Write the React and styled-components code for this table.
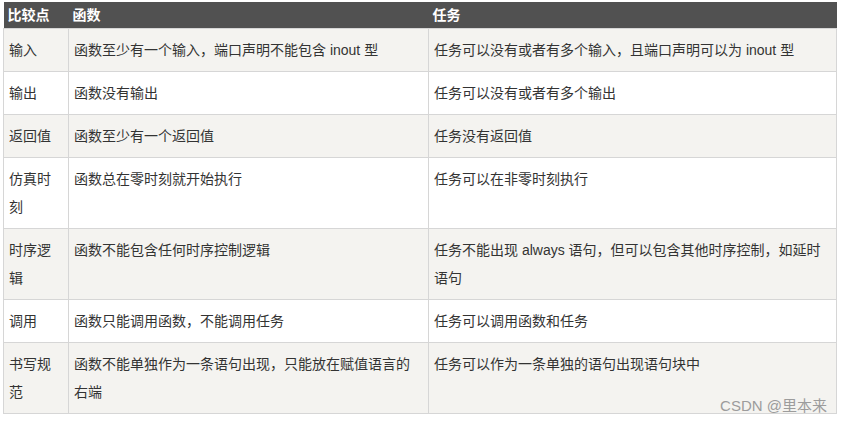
import styled, { createGlobalStyle } from "styled-components";

const GlobalStyle = createGlobalStyle`
  html, body {
    margin: 0;
    padding: 0;
    background: #fff;
  }
  body {
    font-family: "Liberation Sans", "Noto Sans CJK SC", sans-serif;
  }
`;

const rows = [
  ["输入", "函数至少有一个输入，端口声明不能包含 inout 型", "任务可以没有或者有多个输入，且端口声明可以为 inout 型"],
  ["输出", "函数没有输出", "任务可以没有或者有多个输出"],
  ["返回值", "函数至少有一个返回值", "任务没有返回值"],
  ["仿真时刻", "函数总在零时刻就开始执行", "任务可以在非零时刻执行"],
  ["时序逻辑", "函数不能包含任何时序控制逻辑", "任务不能出现 always 语句，但可以包含其他时序控制，如延时语句"],
  ["调用", "函数只能调用函数，不能调用任务", "任务可以调用函数和任务"],
  ["书写规范", "函数不能单独作为一条语句出现，只能放在赋值语言的右端", "任务可以作为一条单独的语句出现语句块中"],
];

const App = () => {
  return (
    <Page>
      <GlobalStyle />
      <Wrap>
        <Table>
          <colgroup>
            <col style={{ width: 65 }} />
            <col style={{ width: 360 }} />
            <col style={{ width: 408 }} />
          </colgroup>
          <thead>
            <tr>
              <Th>比较点</Th>
              <Th>函数</Th>
              <Th>任务</Th>
            </tr>
          </thead>
          <tbody>
            {rows.map((row, key) => (
              <Row key={key} $shaded={key % 2 === 0}>
                {row.map((cell, i) => (
                  <Td key={i}>{cell}</Td>
                ))}
              </Row>
            ))}
          </tbody>
        </Table>
        <Watermark>CSDN @里本来</Watermark>
      </Wrap>
    </Page>
  );
};

const Page = styled.div`
  padding: 2px 0 0 3px;
`;

const Wrap = styled.div`
  position: relative;
  width: 833px;
`;

const Table = styled.table`
  width: 833px;
  table-layout: fixed;
  border-collapse: collapse;
  font-size: 14px;
  color: #333;
`;

const Th = styled.th`
  background-color: #515151;
  color: #fff;
  font-weight: bold;
  text-align: left;
  height: 26px;
  line-height: 26px;
  padding: 0 4px;
  border: none;
`;

const Row = styled.tr`
  background-color: ${(p) => (p.$shaded ? "#f4f3f0" : "#fff")};
`;

const Td = styled.td`
  border: 1px solid #d6d6d6;
  padding: 7px 5px;
  line-height: 28px;
  vertical-align: top;
  word-break: break-all;
`;

const Watermark = styled.div`
  position: absolute;
  right: 9px;
  bottom: 0px;
  font-size: 15px;
  line-height: 16px;
  color: #9c9c9c;
`;

export default App;
